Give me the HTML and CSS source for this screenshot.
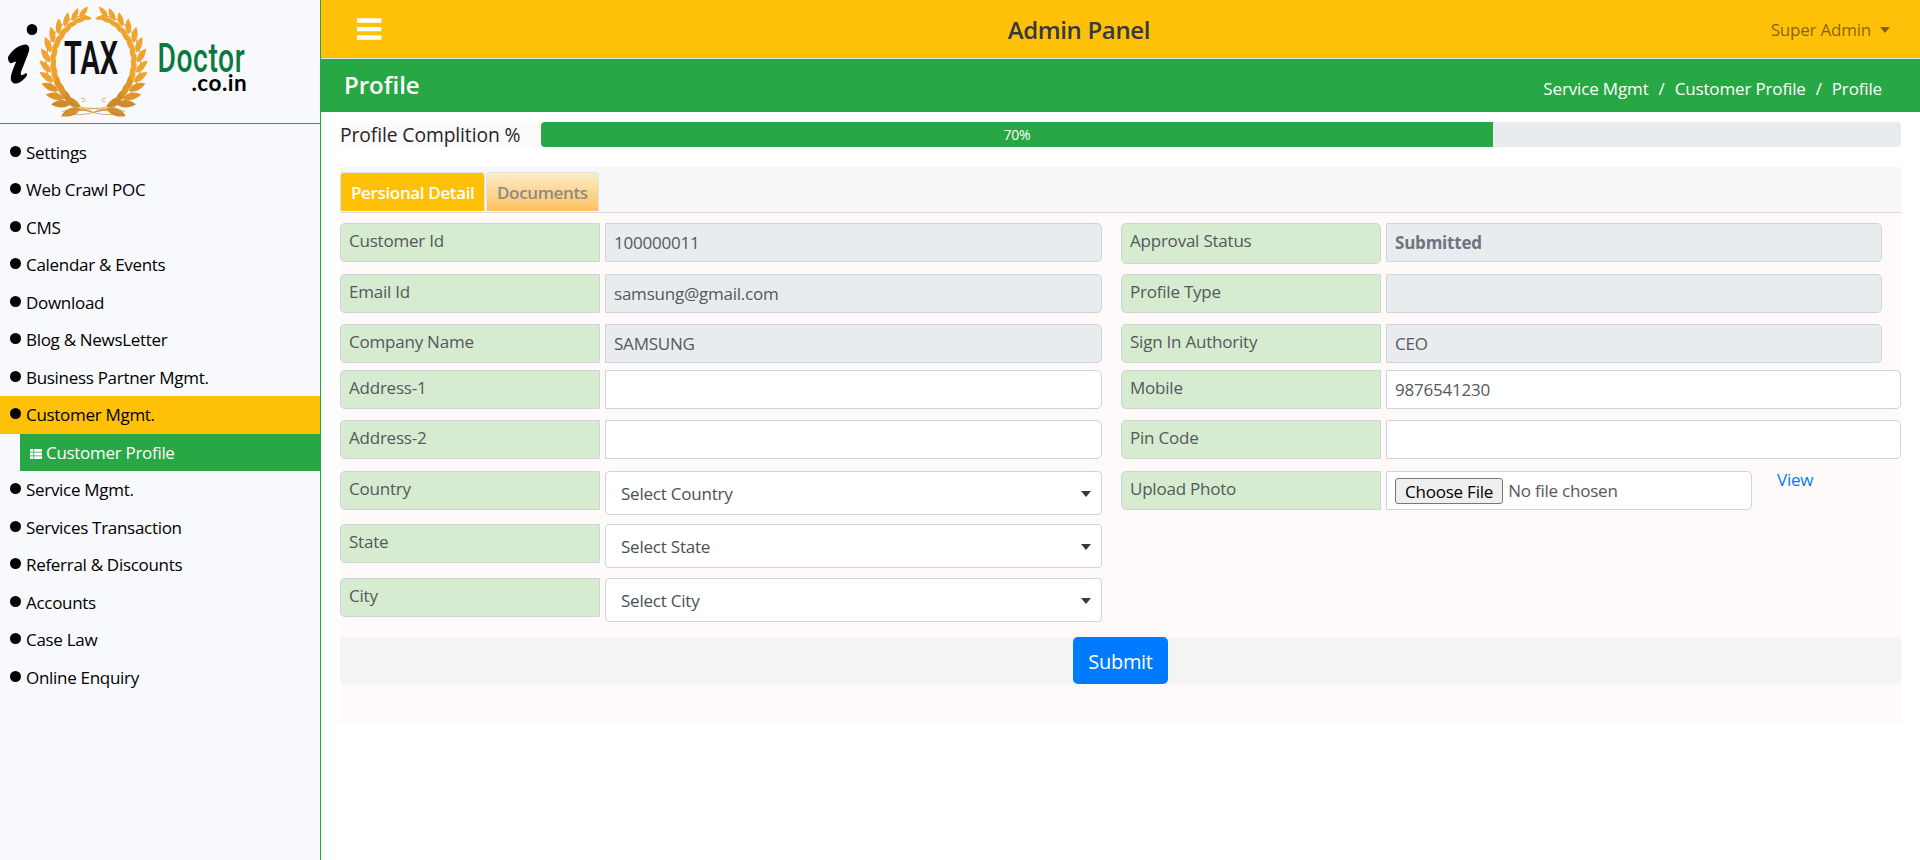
FILE: index.html
```
<!DOCTYPE html>
<html lang="en">
<head>
<meta charset="utf-8">
<title>Admin Panel - Profile</title>
<link rel="stylesheet" href="styles.css">
</head>
<body>
<div class="app">
  <aside class="sidebar">
    <div class="brand">
      <svg class="logo" width="260" height="122" viewBox="0 0 260 122" role="img" aria-label="iTAX Doctor">
        <defs>
          <g id="pair">
            <path d="M0 0C1-6 8-9 14-9C12-3 7 1 0 0Z"/>
            <path d="M0 1C3 6 9 8 14 7C11 1 6-1 0 1Z"/>
          </g>
          <g id="branch">
            <path class="stem" d="M92 109C30 104 34 16 86 13"/>
            <g fill="#cf8a29">
              <use href="#pair" transform="translate(80.4 105.7) rotate(190) scale(1.25)"/>
              <use href="#pair" transform="translate(71 101) rotate(210) scale(1.2)"/>
            </g>
            <g fill="#df9529">
              <use href="#pair" transform="translate(64.6 95.7) rotate(224) scale(1.15)"/>
              <use href="#pair" transform="translate(58.4 88.2) rotate(236) scale(1.1)"/>
            </g>
            <g fill="#f0a32e">
              <use href="#pair" transform="translate(53.8 79.5) rotate(248) scale(1.05)"/>
              <use href="#pair" transform="translate(51 70) rotate(259)"/>
              <use href="#pair" transform="translate(50 60) rotate(270)"/>
              <use href="#pair" transform="translate(51 50) rotate(281)"/>
              <use href="#pair" transform="translate(53.8 40.5) rotate(292)"/>
              <use href="#pair" transform="translate(58.4 31.8) rotate(304) scale(.95)"/>
              <use href="#pair" transform="translate(64.6 24.3) rotate(316) scale(.9)"/>
              <use href="#pair" transform="translate(72 18.4) rotate(328) scale(.85)"/>
              <use href="#pair" transform="translate(79.4 14.3) rotate(342) scale(.8)"/>
            </g>
            <path class="swirl" d="M62 109C78 103 104 105 122 113M72 112C88 113 106 109 113 97M81 96C85 94 87 100 82 99M94 110C84 106 76 108 66 110"/>
          </g>
        </defs>
        <g transform="translate(0 2.500)">
          <use href="#branch"/>
          <use href="#branch" transform="translate(187 0) scale(-1 1)"/>
        </g>
        <ellipse cx="32" cy="29.5" rx="5.3" ry="5.6"/>
        <path d="M8 57C12 50 19 45 25 44.500C30 45 30 49 28 54L21 72C20 76 22 76 26 73C28 74 27 76 25 78C20 84 13 86 11 80C10 76 13 69 16 62C14 61 12 64 10 63C8 61 8 59 8 57Z"/>
        <text class="logo-tax" transform="translate(64 74) scale(.63 1)">TAX</text>
        <text class="logo-doctor" transform="translate(157.500 72) scale(.69 1)">Doctor</text>
        <text class="logo-domain" x="191.500" y="91">.co.in</text>
      </svg>
    </div>
    <nav class="menu">
      <a class="item"><i class="dot"></i>Settings</a>
      <a class="item"><i class="dot"></i>Web Crawl POC</a>
      <a class="item"><i class="dot"></i>CMS</a>
      <a class="item"><i class="dot"></i>Calendar &amp; Events</a>
      <a class="item"><i class="dot"></i>Download</a>
      <a class="item"><i class="dot"></i>Blog &amp; NewsLetter</a>
      <a class="item"><i class="dot"></i>Business Partner Mgmt.</a>
      <a class="item active"><i class="dot"></i>Customer Mgmt.</a>
      <a class="item sub"><svg class="list-icon" width="12" height="10" viewBox="0 0 12 10"><path fill="#fff" d="M0 0h3.400v2.800H0zM4.200 0H12v2.800H4.200zM0 3.600h3.400v2.800H0zM4.200 3.600H12v2.800H4.200zM0 7.200h3.400V10H0zM4.200 7.200H12V10H4.200z"/></svg>Customer Profile</a>
      <a class="item"><i class="dot"></i>Service Mgmt.</a>
      <a class="item"><i class="dot"></i>Services Transaction</a>
      <a class="item"><i class="dot"></i>Referral &amp; Discounts</a>
      <a class="item"><i class="dot"></i>Accounts</a>
      <a class="item"><i class="dot"></i>Case Law</a>
      <a class="item"><i class="dot"></i>Online Enquiry</a>
    </nav>
  </aside>
  <div class="main">
    <header class="topbar">
      <svg class="burger" width="25" height="22" viewBox="0 0 25 22"><path fill="#fff" d="M0 .3h24.500v4.400H0zM0 9h24.500v4.200H0zM0 17.300h24.500v4.400H0z"/></svg>
      <h1 class="app-title">Admin Panel</h1>
      <a class="user">Super Admin<i class="caret"></i></a>
    </header>
    <div class="titlebar">
      <h2 class="page-title">Profile</h2>
      <div class="crumbs"><span>Service Mgmt</span><span class="slash">/</span><span>Customer Profile</span><span class="slash">/</span><span>Profile</span></div>
    </div>
    <div class="content">
      <div class="completion">
        <span class="completion-label">Profile Complition %</span>
        <div class="progress"><div class="bar" style="width:70%">70%</div></div>
      </div>
      <section class="card">
        <div class="tabs"><a class="tab current">Persional Detail</a><a class="tab docs">Documents</a></div>
        <form class="form">
          <label class="label">Customer Id</label><input class="field off" value="100000011" readonly>
          <label class="label right round">Approval Status</label><input class="field off short strong" value="Submitted" readonly>

          <label class="label">Email Id</label><input class="field off" value="samsung@gmail.com" readonly>
          <label class="label right">Profile Type</label><input class="field off short" readonly>

          <label class="label">Company Name</label><input class="field off" value="SAMSUNG" readonly>
          <label class="label right">Sign In Authority</label><input class="field off short" value="CEO" readonly>

          <label class="label">Address-1</label><input class="field">
          <label class="label right">Mobile</label><input class="field" value="9876541230">

          <label class="label">Address-2</label><input class="field">
          <label class="label right">Pin Code</label><input class="field">

          <label class="label">Country</label><div class="select">Select Country<i class="caret"></i></div>
          <label class="label right">Upload Photo</label>
          <div class="upload"><div class="field file"><span class="choose">Choose File</span><span class="none">No file chosen</span></div><a class="view">View</a></div>

          <label class="label first">State</label><div class="select">Select State<i class="caret"></i></div>
          <label class="label first">City</label><div class="select">Select City<i class="caret"></i></div>
        </form>
        <div class="actions"><button class="submit" type="button">Submit</button></div>
      </section>
    </div>
  </div>
</div>
</body>
</html>
```
FILE: styles.css
```
* { box-sizing: border-box; }
body { margin: 0; background: #fff; color: #212529; font-family: "Open Sans", "Noto Sans", sans-serif; font-size: 17px; font-weight: 400; line-height: 24px; letter-spacing: -.22px; }
.app { display: flex; height: 860px; overflow: hidden; }

.sidebar { width: 321px; flex: none; background: #f8f9fc; border-right: 1px solid #28a745; }
.brand { height: 124px; border-bottom: 1px solid #28a745; }
.logo { display: block; }
.stem { fill: none; stroke: #d9932c; stroke-width: 1; }
.swirl { fill: none; stroke: #d79c48; stroke-width: .8; }
.logo-tax { font: 600 46px Roboto, sans-serif; fill: #111; letter-spacing: 0; }
.logo-doctor { font: 500 41px Roboto, sans-serif; fill: #0b7a3f; letter-spacing: .8px; }
.logo-domain { font: 700 22.500px Lato, sans-serif; fill: #000; letter-spacing: .5px; }

.menu { padding-top: 9.500px; }
.item { display: flex; align-items: center; height: 37.500px; padding: 1px 0 0 10px; color: #000; letter-spacing: -.3px; white-space: nowrap; }
.dot { width: 11px; height: 11px; margin: -3px 5px 0 0; border-radius: 50%; background: #000; }
.active { background: #ffc107; }
.sub { margin-left: 20px; background: #28a745; color: #fff; }
.list-icon { margin: 3px 4px 0 0; }

.main { flex: 1; min-width: 0; }
.topbar { display: flex; justify-content: space-between; align-items: center; height: 59px; padding: 0 30px 0 36px; background: #ffc107; border-bottom: 1px solid #dee2e6; }
.app-title { margin: 1px 0 0 5px; font-size: 24px; font-weight: 600; color: #343a40; line-height: 30px; letter-spacing: -.35px; }
.user { display: flex; align-items: center; margin-top: 1px; color: rgba(0,0,0,.5); }
.user .caret { margin-left: 9px; border-top-color: #806104; }
.caret { border: 5px solid transparent; border-top: 6px solid #343a40; border-bottom: 0; }
.titlebar { display: flex; justify-content: space-between; height: 53px; padding: 0 38px 0 23px; background: #28a745; color: #fff; }
.page-title { margin: 11px 0 0; font-size: 24px; font-weight: 600; line-height: 30px; letter-spacing: 0; }
.crumbs { display: flex; gap: 10px; margin-top: 18px; letter-spacing: -.15px; }

.content { padding: 10px 19px 0; }
.completion { display: flex; height: 25px; }
.completion-label { width: 201px; background: #fffafa; font-size: 19.300px; line-height: 26px; letter-spacing: -.1px; white-space: nowrap; }
.progress { flex: 1; background: #e9ecef; border-radius: 4px; overflow: hidden; }
.bar { height: 25px; background: #28a745; color: #fff; font-size: 14px; line-height: 25px; text-align: center; }

.card { height: 555px; margin-top: 20px; background: #fffafa; }
.tabs { display: flex; gap: 1px; height: 46px; padding-top: 5px; background: #f7f7f7; border-bottom: 1px solid #d8dadd; border-radius: 4px 4px 0 0; }
.tab { height: 39px; padding: 8px 10px 0; border: 1px solid #dee2e6; border-bottom: 0; border-radius: 4px 4px 0 0; font-weight: 600; letter-spacing: -.35px; white-space: nowrap; }
.current { width: 145px; background: #ffc107; color: #fff; }
.docs { width: 113px; background: linear-gradient(#fbecc8, #ffc160); color: #8b8b85; }

.form { display: grid; grid-template-columns: 265px 497px 284px 1fr; grid-template-rows: 51px 50px 46px 50px 51px 53px 54px 59px; align-items: start; padding-top: 10px; color: #495057; }
.label { width: 260px; height: 39px; padding: 5px 9px 0 8px; border: 1px solid #ced4da; border-radius: 5px 0 0 5px; background: #d7ebd0; color: #54595b; }
.right { margin-left: 19px; }
.round { height: 41px; border-radius: 5px; }
.first { grid-column: 1; }
.field { width: 100%; height: 39px; padding: 0 9px 0 8px; border: 1px solid #ced4da; border-radius: 0 5px 5px 0; background: #fff; color: #54595e; font: inherit; letter-spacing: inherit; outline: 0; }
.off { background: #e9ecef; }
.short { width: calc(100% - 19px); }
.strong { font-weight: 700; color: #6c757d; }
.select { display: flex; align-items: center; justify-content: space-between; height: 44px; padding: 1px 10px 0 15px; border: 1px solid #ced4da; border-radius: 4px; background: #fff; }
.upload { display: flex; }
.file { display: flex; flex: none; width: 366px; }
.choose { height: 26px; margin-top: 6px; padding: 0 9px; border: 1px solid #767676; border-radius: 3px; background: #efefef; color: #000; line-height: 25px; }
.none { margin: 7px 0 0 5px; }
.view { margin: -3px 0 0 25px; color: #007bff; }
.actions { display: flex; justify-content: center; height: 47px; background: #f4f4f4; border-radius: 0 0 4px 4px; }
.submit { width: 95px; height: 47px; padding: 2px 0 0; border: 0; border-radius: 5px; background: #007bff; color: #fff; font: 400 20px "Open Sans", sans-serif; letter-spacing: -.3px; }
```
